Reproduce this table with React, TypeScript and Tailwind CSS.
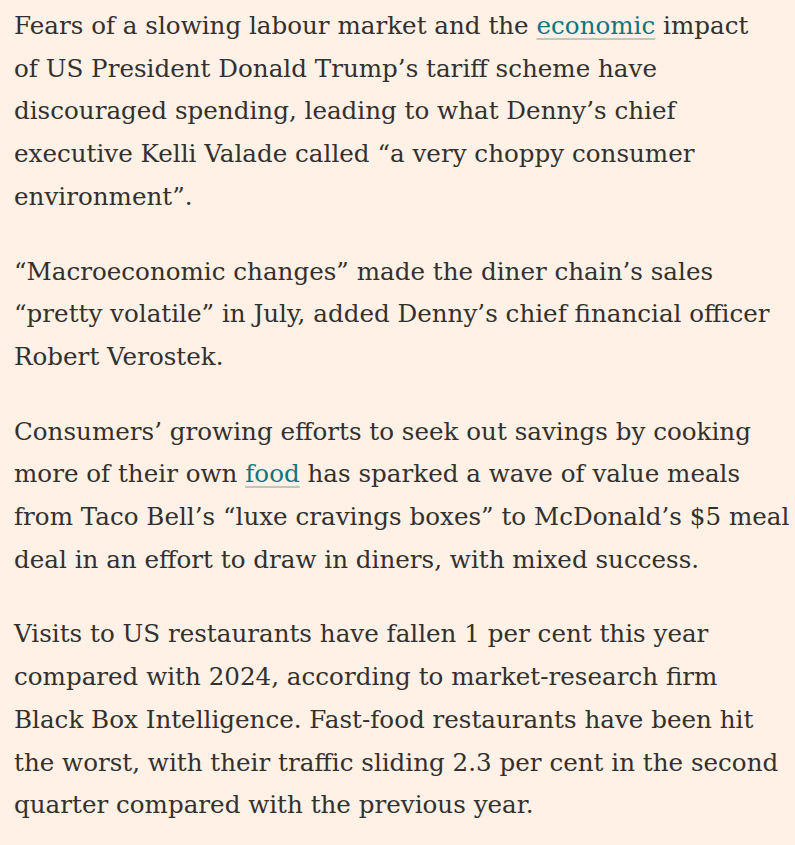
const paragraphs: React.ReactNode[][] = [
  [
    <>Fears of a slowing labour market and the <Link>economic</Link> impact</>,
    "of US President Donald Trump’s tariff scheme have",
    "discouraged spending, leading to what Denny’s chief",
    "executive Kelli Valade called “a very choppy consumer",
    "environment”.",
  ],
  [
    "“Macroeconomic changes” made the diner chain’s sales",
    "“pretty volatile” in July, added Denny’s chief financial officer",
    "Robert Verostek.",
  ],
  [
    "Consumers’ growing efforts to seek out savings by cooking",
    <>more of their own <Link>food</Link> has sparked a wave of value meals</>,
    "from Taco Bell’s “luxe cravings boxes” to McDonald’s $5 meal",
    "deal in an effort to draw in diners, with mixed success.",
  ],
  [
    "Visits to US restaurants have fallen 1 per cent this year",
    "compared with 2024, according to market-research firm",
    "Black Box Intelligence. Fast-food restaurants have been hit",
    "the worst, with their traffic sliding 2.3 per cent in the second",
    "quarter compared with the previous year.",
  ],
];

function Link({ children }: { children: React.ReactNode }) {
  return (
    <a className="text-[#0d7680] underline decoration-[#c9c2ba] decoration-2 underline-offset-[4px]">
      {children}
    </a>
  );
}

export default function App() {
  return (
    <div className="min-h-[845px] w-[795px] bg-[#fff1e5] pl-[14px] pt-[5px] font-['DejaVu_Serif',serif] text-[24.6px] leading-[42.7px] text-[#33302e]">
      {paragraphs.map((lines, i) => (
        <p key={i} className="mb-8">
          {lines.map((line, j) => (
            <span key={j} className="block whitespace-nowrap">
              {line}
            </span>
          ))}
        </p>
      ))}
    </div>
  );
}
